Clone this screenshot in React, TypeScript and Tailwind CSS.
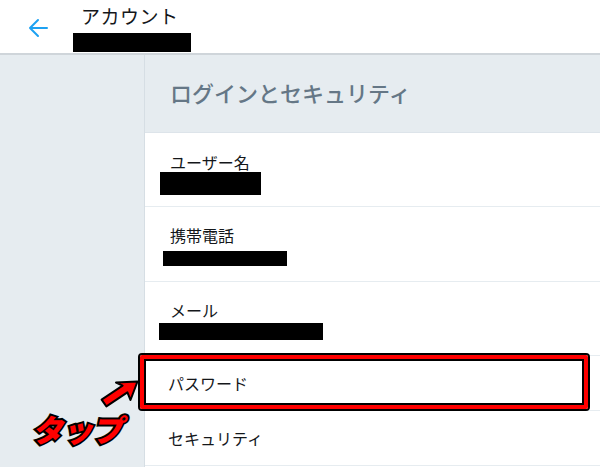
const jp = "font-['Noto_Sans_CJK_JP','Noto_Sans',sans-serif]";

interface RowProps {
  label: string;
  pt: string;
  h: string;
  bar?: string;
}

const Row = ({ label, pt, h, bar }: RowProps) => (
  <div className={`${h} ${pt} border-b border-[#e6ecf0] bg-white`}>
    <div className="pl-[25px] text-[16px] leading-5 text-[#14171a]">{label}</div>
    {bar && <div className={bar} />}
  </div>
);

const App = () => {
  return (
    <div className={`relative h-[467px] w-[600px] overflow-hidden bg-white ${jp}`}>
      {/* header */}
      <header className="flex h-[55px] border-b-2 border-[#cfd5da] bg-white">
        <div className="w-[76px] pl-[28px] pt-[18px]">
          <svg width="20" height="20" viewBox="0 0 20 20" fill="none" stroke="#1da1f2" strokeWidth="2" strokeLinecap="round" strokeLinejoin="round">
            <path d="M19 10H2M10 2L2 10L10 18" />
          </svg>
        </div>
        <div className="flex flex-col">
          <div className="ml-[5px] mt-[4px] text-[19px] leading-6 tracking-[0.5px] text-[#14171a]">アカウント</div>
          <div className="ml-[-3px] mt-[5px] h-[19px] w-[118px] bg-black" />
        </div>
      </header>

      <div className="flex h-[412px]">
        <aside className="w-[145px] border-r border-[#d6dee4] bg-[#e6ecf0]" />
        <main className="flex-1 bg-white">
          <div className="flex h-[78px] items-center border-b border-[#dde4ea] bg-[#e6ecf0] pl-[25px]">
            <h2 className="mt-[-2px] text-[22px] font-medium text-[#657786]">ログインとセキュリティ</h2>
          </div>
          <Row label="ユーザー名" h="h-[74px]" pt="pt-[19px]" bar="ml-[15px] h-[23px] w-[101px] bg-black" />
          <Row label="携帯電話" h="h-[75px]" pt="pt-[18px]" bar="ml-[18px] mt-[6px] h-[15px] w-[124px] bg-black" />
          <Row label="メール" h="h-[74px]" pt="pt-[18px]" bar="ml-[14px] mt-[3px] h-[17px] w-[164px] bg-black" />
          <div className="flex h-[55px] items-center border-b border-[#e6ecf0] pl-[23px] text-[16px] text-[#14171a]">
            パスワード
          </div>
          <div className="flex h-[55px] items-center border-b border-[#e6ecf0] pl-[23px] text-[16px] text-[#14171a]">
            セキュリティ
          </div>
        </main>
      </div>

      {/* annotation: red box */}
      <div className="absolute left-[138px] top-[353px] h-[58px] w-[452px] rounded-[4px] border-2 border-black">
        <div className="h-full w-full rounded-[2px] border-[4px] border-[#ff0000]">
          <div className="h-full w-full border-2 border-black" />
        </div>
      </div>

      {/* annotation: arrow */}
      <svg className="absolute left-[95px] top-[370px]" width="50" height="40" viewBox="0 0 50 40">
        <polygon
          points="6.6,29.6 27.6,15.6 21,12.5 42.5,11.5 35.5,30 32.4,22.4 11.4,36.4"
          fill="#ff0000"
          stroke="#000"
          strokeWidth="2"
          strokeLinejoin="round"
        />
      </svg>

      {/* annotation: label */}
      <span className="absolute left-[35px] top-[409px] -skew-x-12 text-[31px] font-black leading-10 tracking-[-1px] text-[#ff0000] [-webkit-text-stroke:4px_black] [paint-order:stroke_fill]">
        タップ
      </span>
    </div>
  );
};

export default App;
